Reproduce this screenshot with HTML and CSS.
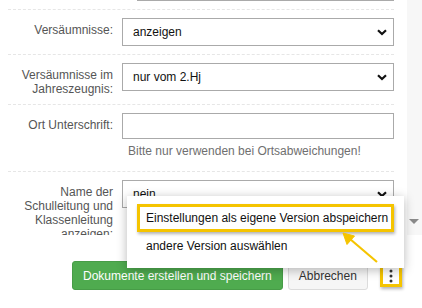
FILE: index.html
```html
<!DOCTYPE html>
<html lang="de">
<head>
  <meta charset="UTF-8">
  <meta name="viewport" content="width=device-width, initial-scale=1.0">
  <title>Dokumente erstellen</title>
  <link rel="stylesheet" href="styles.css">
</head>
<body>
  <div class="dialog">
    <div class="scroll">
      <form class="form-body">
        <div class="prev-row"><div class="prev-field"></div></div>

        <div class="row">
          <label class="lbl">Versäumnisse:</label>
          <div class="field">
            <span class="sel-wrap">
              <select><option>anzeigen</option></select>
              <svg class="chev" width="10" height="7" viewBox="0 0 10 7"><path d="M1 1.2 L5 5 L9 1.2" fill="none" stroke="#111" stroke-width="2.2"/></svg>
            </span>
          </div>
        </div>

        <div class="row">
          <label class="lbl">Versäumnisse im Jahreszeugnis:</label>
          <div class="field">
            <span class="sel-wrap">
              <select><option>nur vom 2.Hj</option></select>
              <svg class="chev" width="10" height="7" viewBox="0 0 10 7"><path d="M1 1.2 L5 5 L9 1.2" fill="none" stroke="#111" stroke-width="2.2"/></svg>
            </span>
          </div>
        </div>

        <div class="row">
          <label class="lbl">Ort Unterschrift:</label>
          <div class="field">
            <input type="text" class="txt">
            <p class="help">Bitte nur verwenden bei Ortsabweichungen!</p>
          </div>
        </div>

        <div class="row">
          <label class="lbl">Name der Schulleitung und Klassenleitung anzeigen:</label>
          <div class="field">
            <span class="sel-wrap">
              <select><option>nein</option></select>
              <svg class="chev" width="10" height="7" viewBox="0 0 10 7"><path d="M1 1.2 L5 5 L9 1.2" fill="none" stroke="#111" stroke-width="2.2"/></svg>
            </span>
          </div>
        </div>
      </form>
      <div class="scrollbar"><span class="sb-arrow"></span></div>
    </div>

    <div class="footer">
      <button type="button" class="btn btn-success">Dokumente erstellen und speichern</button>
      <button type="button" class="btn btn-default">Abbrechen</button>
      <button type="button" class="btn-more mark">
        <svg width="4" height="14" viewBox="0 0 4 14"><circle cx="2" cy="2" r="1.5" fill="#333"/><circle cx="2" cy="7" r="1.5" fill="#333"/><circle cx="2" cy="12" r="1.5" fill="#333"/></svg>
      </button>
    </div>

    <ul class="menu">
      <li class="mark">Einstellungen als eigene Version abspeichern</li>
      <li>andere Version auswählen</li>
    </ul>

    <!-- annotation arrow -->
    <svg class="arrow" width="422" height="308" viewBox="0 0 422 308">
      <g fill="#f5c400" stroke="#f5c400">
        <line x1="377" y1="262" x2="350" y2="239" stroke-width="2.2"/>
        <polygon points="343,233 354.5,236 347,244.5" stroke-width="1"/>
      </g>
    </svg>
  </div>
</body>
</html>
```

FILE: styles.css
```css
body {
  margin: 0;
  font-family: "Liberation Sans", Arial, sans-serif;
  font-size: 12px;
  color: #222;
  background: #fff;
}
.dialog {
  position: relative;
  width: 422px;
  height: 308px;
  overflow: hidden;
}
.scroll {
  display: flex;
  height: 235px;
  overflow: hidden;
}
.form-body {
  flex: 1;
  margin: 0;
  padding: 0 13px 0 8px;
}
.scrollbar {
  width: 15px;
  background: #f7f7f7;
  display: flex;
  flex-direction: column;
  justify-content: flex-end;
}
.sb-arrow {
  display: block;
  height: 17px;
  position: relative;
}
.sb-arrow::after {
  content: "";
  position: absolute;
  left: 2px;
  top: 1px;
  border-left: 5px solid transparent;
  border-right: 5px solid transparent;
  border-top: 5px solid #8a8a8a;
}
.prev-row {
  padding-bottom: 8px;
}
.prev-field {
  margin-left: 129px;
  border-bottom: 1px solid #aaa;
}
.row {
  display: grid;
  grid-template-columns: 105px 1fr;
  column-gap: 9px;
  padding: 8px 0;
  border-top: 1px dashed #e6e6e6;
}
.lbl {
  text-align: right;
  padding-top: 5px;
  line-height: 14px;
  color: #555;
}
.sel-wrap {
  position: relative;
  display: block;
}
select {
  display: block;
  width: 100%;
  height: 28px;
  margin: 0;
  padding: 0 24px 0 10px;
  border: 1px solid #aaa;
  border-radius: 0;
  background: #fff;
  font-family: "Liberation Sans", Arial, sans-serif;
  font-size: 12px;
  color: #111;
  appearance: none;
  -webkit-appearance: none;
}
.chev {
  position: absolute;
  right: 7px;
  top: 11px;
}
.txt {
  display: block;
  box-sizing: border-box;
  width: 100%;
  height: 26px;
  margin: 0;
  border: 1px solid #aaa;
  background: #fff;
}
.help {
  margin: 5px 0 5px 6px;
  line-height: 14px;
  color: #6f6f6f;
}
.footer {
  display: flex;
  align-items: center;
  gap: 5px;
  padding: 26px 0 0 72px;
}
.btn {
  height: 29px;
  padding: 0 10px;
  border-radius: 3px;
  font-family: "Liberation Sans", Arial, sans-serif;
  font-size: 12px;
  white-space: nowrap;
  cursor: pointer;
}
.btn-success {
  background: #4fab4f;
  border: 1px solid #479c47;
  color: #fff;
}
.btn-default {
  background: #f6f6f6;
  border: 1px solid #dcdcdc;
  color: #333;
}
.btn-more {
  box-sizing: border-box;
  width: 22px;
  height: 23px;
  margin-left: 7px;
  padding: 0;
  background: #fff;
  display: flex;
  align-items: center;
  justify-content: center;
}
.mark {
  border: 3px solid #f5c400;
  box-shadow: 1px 2px 3px rgba(0, 0, 0, 0.3);
}
.menu {
  position: absolute;
  left: 127px;
  top: 196px;
  box-sizing: border-box;
  width: 277px;
  margin: 0;
  padding: 8px 10px;
  list-style: none;
  background: #fff;
  box-shadow: 0 2px 10px rgba(0, 0, 0, 0.28);
}
.menu li {
  padding: 3px 4px 3px 6px;
  line-height: 16px;
  white-space: nowrap;
  border: 3px solid transparent;
  color: #111;
}
.menu li.mark {
  border-color: #f5c400;
}
.arrow {
  position: absolute;
  left: 0;
  top: 0;
  pointer-events: none;
}
```
